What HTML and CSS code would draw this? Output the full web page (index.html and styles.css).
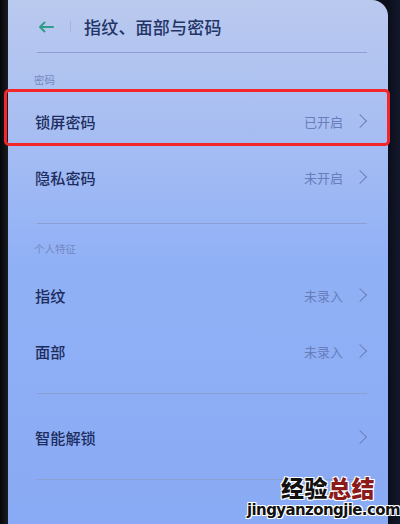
FILE: index.html
```html
<!DOCTYPE html>
<html lang="zh-CN">
<head>
    <meta charset="UTF-8">
    <meta name="viewport" content="width=device-width, initial-scale=1.0">
    <title>指纹、面部与密码</title>
    <link rel="stylesheet" href="styles.css">
</head>
<body>
    <div class="phone">
        <div class="screen">
            <div class="header">
                <svg class="back" width="16" height="12" viewBox="0 0 16 12">
                    <path d="M15 6H2M6.5 1.5L2 6l4.5 4.5" fill="none" stroke="#2f9c8c" stroke-width="2" stroke-linecap="round" stroke-linejoin="round"/>
                </svg>
                <span class="bar"></span>
                <h1>指纹、面部与密码</h1>
            </div>
            <div class="divider"></div>

            <div class="group-label first">密码</div>
            <div class="row highlight">
                <span class="name">锁屏密码</span>
                <span class="status">已开启</span>
                <span class="chev"></span>
            </div>
            <div class="row">
                <span class="name">隐私密码</span>
                <span class="status">未开启</span>
                <span class="chev"></span>
            </div>
            <div class="divider gap-a"></div>

            <div class="group-label">个人特征</div>
            <div class="row">
                <span class="name">指纹</span>
                <span class="status">未录入</span>
                <span class="chev"></span>
            </div>
            <div class="row">
                <span class="name">面部</span>
                <span class="status">未录入</span>
                <span class="chev"></span>
            </div>
            <div class="divider gap"></div>

            <div class="row single">
                <span class="name">智能解锁</span>
                <span class="status"></span>
                <span class="chev"></span>
            </div>
            <div class="divider gap"></div>
        </div>
        <div class="watermark">
            <div class="wm-title">经验<span class="red">总结</span></div>
            <div class="wm-url">jingyanzongjie.com</div>
        </div>
    </div>
</body>
</html>
```

FILE: styles.css
```css
* {
    box-sizing: border-box;
}
body {
    margin: 0;
    background: #0d0f16;
    font-family: "Noto Sans CJK SC", "Noto Sans", sans-serif;
    color: #1f2f5e;
}
.phone {
    position: relative;
    width: 400px;
    height: 524px;
    overflow: hidden;
    padding-left: 8px;
    padding-right: 12px;
    background: linear-gradient(90deg, #050608 0, #1a1c22 8px, #0b0e1a 388px, #12182c 100%);
}
.screen {
    height: 524px;
    border-top-right-radius: 16px;
    background: linear-gradient(180deg, #bac9ee 0, #a9bff2 120px, #91b1f6 260px, #89aaf4 524px);
    display: flex;
    flex-direction: column;
}
.header {
    height: 52px;
    display: flex;
    align-items: center;
    padding-left: 30px;
}
.back {
    margin-top: 1px;
}
.bar {
    width: 1px;
    height: 11px;
    background: #a6b4d8;
    margin-left: 16px;
    margin-right: 13px;
}
h1 {
    margin: 0;
    font-size: 17px;
    font-weight: 500;
    color: #233466;
    letter-spacing: 0.2px;
}
.divider {
    height: 1px;
    margin: 0 21px 0 29px;
    background: #8a9fd2;
}
.divider.gap-a {
    margin-top: 18px;
}
.divider.gap {
    margin-top: 14px;
}
.group-label {
    font-size: 10.5px;
    line-height: 14px;
    color: #7488bf;
    padding: 18px 0 11px 26px;
}
.group-label.first {
    padding: 20px 0 6px 26px;
}
.row {
    position: relative;
    height: 56px;
    display: flex;
    align-items: center;
    padding: 0 20px 0 27px;
}
.row.single {
    margin-top: 15px;
}
.name {
    flex: 1;
    font-size: 15.2px;
    font-weight: 500;
    color: #1d2d5e;
}
.status {
    font-size: 13px;
    color: #687dba;
    margin-right: 12px;
}
.chev {
    width: 10px;
    height: 10px;
    border-top: 1.5px solid #6c81bb;
    border-right: 1.5px solid #6c81bb;
    transform: rotate(45deg);
    margin-right: 3px;
}
.highlight::after {
    content: "";
    position: absolute;
    left: -4px;
    right: -2px;
    top: -4px;
    bottom: 3px;
    border: 3.5px solid #f2262b;
    border-radius: 5px;
}
.watermark {
    position: absolute;
    left: 247px;
    top: 475px;
    width: 142px;
    text-align: center;
    font-family: "Noto Sans CJK SC", sans-serif;
    font-weight: 900;
    color: #111;
    text-shadow: 1px 1px 0 #fff, -1px -1px 0 #fff, 1px -1px 0 #fff, -1px 1px 0 #fff;
}
.wm-title {
    font-size: 23px;
    line-height: 24px;
    letter-spacing: 0.5px;
    padding-left: 20px;
}
.red {
    color: #8c1a1a;
}
.wm-url {
    margin-top: 3px;
    font-family: "DejaVu Sans", sans-serif;
    font-size: 15px;
    line-height: 16px;
    font-weight: bold;
    letter-spacing: -0.6px;
}
```
